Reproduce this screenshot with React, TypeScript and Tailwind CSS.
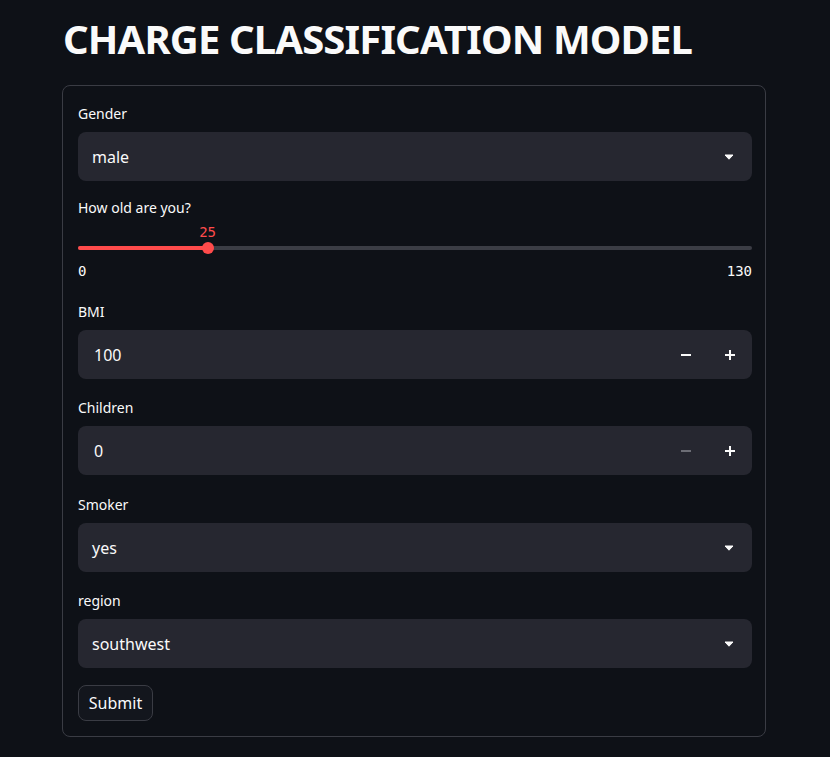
import React from "react";

const sans = { fontFamily: '"Noto Sans", "Open Sans", sans-serif' };

function Label({ children, mb = true }: { children: React.ReactNode; mb?: boolean }) {
  return (
    <div className={`flex h-6 items-center text-[14px] text-[#fafafa] ${mb ? "mb-[7px]" : ""}`}>{children}</div>
  );
}

function Caret() {
  return (
    <svg width="10" height="6" viewBox="0 0 10 6" className="mr-[1px]">
      <path d="M1 1 H9 L5 5.2 Z" fill="#fafafa" stroke="#fafafa" strokeWidth="1" strokeLinejoin="round" />
    </svg>
  );
}

function Select({ label, value }: { label: string; value: string }) {
  return (
    <div>
      <Label>{label}</Label>
      <div className="flex h-[49px] items-center justify-between rounded-lg bg-[#262730] pl-[14px] pr-[17px] text-[16px] text-[#fafafa]">
        <span>{value}</span>
        <Caret />
      </div>
    </div>
  );
}

function Minus({ dim }: { dim?: boolean }) {
  return (
    <svg width="10" height="10" viewBox="0 0 10 10">
      <rect x="0" y="4" width="10" height="2" fill={dim ? "#6c6d75" : "#fafafa"} />
    </svg>
  );
}
function Plus() {
  return (
    <svg width="10" height="10" viewBox="0 0 10 10">
      <rect x="0" y="4" width="10" height="2" fill="#fafafa" />
      <rect x="4" y="0" width="2" height="10" fill="#fafafa" />
    </svg>
  );
}

function NumberInput({ label, value, dimMinus, extra }: { label: string; value: string; dimMinus?: boolean; extra?: boolean }) {
  return (
    <div className={extra ? "pb-[1px]" : ""}>
      <Label>{label}</Label>
      <div className="flex h-[49px] items-center rounded-lg bg-[#262730] text-[16px] text-[#fafafa]">
        <span className="flex-1 pl-4">{value}</span>
        <div className="flex h-full w-[45px] items-center justify-center">
          <Minus dim={dimMinus} />
        </div>
        <div className="flex h-full w-[44px] items-center justify-center">
          <Plus />
        </div>
      </div>
    </div>
  );
}

function Slider() {
  const pct = (25 / 130) * 100;
  const mono = { fontFamily: '"DejaVu Sans Mono", "Liberation Mono", monospace' };
  return (
    <div className="-mt-[2px]">
      <Label mb={false}>How old are you?</Label>
      <div className="relative h-[64px]">
        <div
          className="absolute top-[5px] -translate-x-1/2 text-[14px] leading-[16px] text-[#ff4b4b]"
          style={{ ...mono, left: `${pct}%` }}
        >
          25
        </div>
        <div className="absolute left-0 right-0 top-[27px] h-1 rounded-full bg-[#3b3d45]" />
        <div className="absolute left-0 top-[27px] h-1 rounded-full bg-[#ff4b4b]" style={{ width: `${pct}%` }} />
        <div
          className="absolute top-[23px] h-3 w-3 -translate-x-1/2 rounded-full bg-[#ff4b4b]"
          style={{ left: `${pct}%` }}
        />
        <div
          className="absolute left-0 right-0 top-[44px] flex justify-between text-[14px] leading-[16px] text-[#fafafa]"
          style={mono}
        >
          <span>0</span>
          <span>130</span>
        </div>
      </div>
    </div>
  );
}

export default function App() {
  return (
    <div className="min-h-[757px] w-full bg-[#0e1117] text-[#fafafa]" style={sans}>
      <div className="ml-[62px] w-[704px] pt-[13px]">
        <h1 className="pl-[1px] text-[40px] font-bold leading-[52px] tracking-[-0.85px] text-[#fafafa]">
          CHARGE CLASSIFICATION MODEL
        </h1>
        <div className="mt-[20px] flex flex-col gap-4 rounded-lg border border-[#3a3c44] pb-[15px] pl-[15px] pr-[13px] pt-[15px]">
          <Select label="Gender" value="male" />
          <Slider />
          <NumberInput label="BMI" value="100" />
          <NumberInput label="Children" value="0" dimMinus extra />
          <Select label="Smoker" value="yes" />
          <Select label="region" value="southwest" />
          <div className="pt-[1px]">
            <button className="h-[36px] w-[75px] rounded-lg border border-[#3a3c44] bg-[#13161d] text-[16px] text-[#fafafa]">
              Submit
            </button>
          </div>
        </div>
      </div>
    </div>
  );
}
